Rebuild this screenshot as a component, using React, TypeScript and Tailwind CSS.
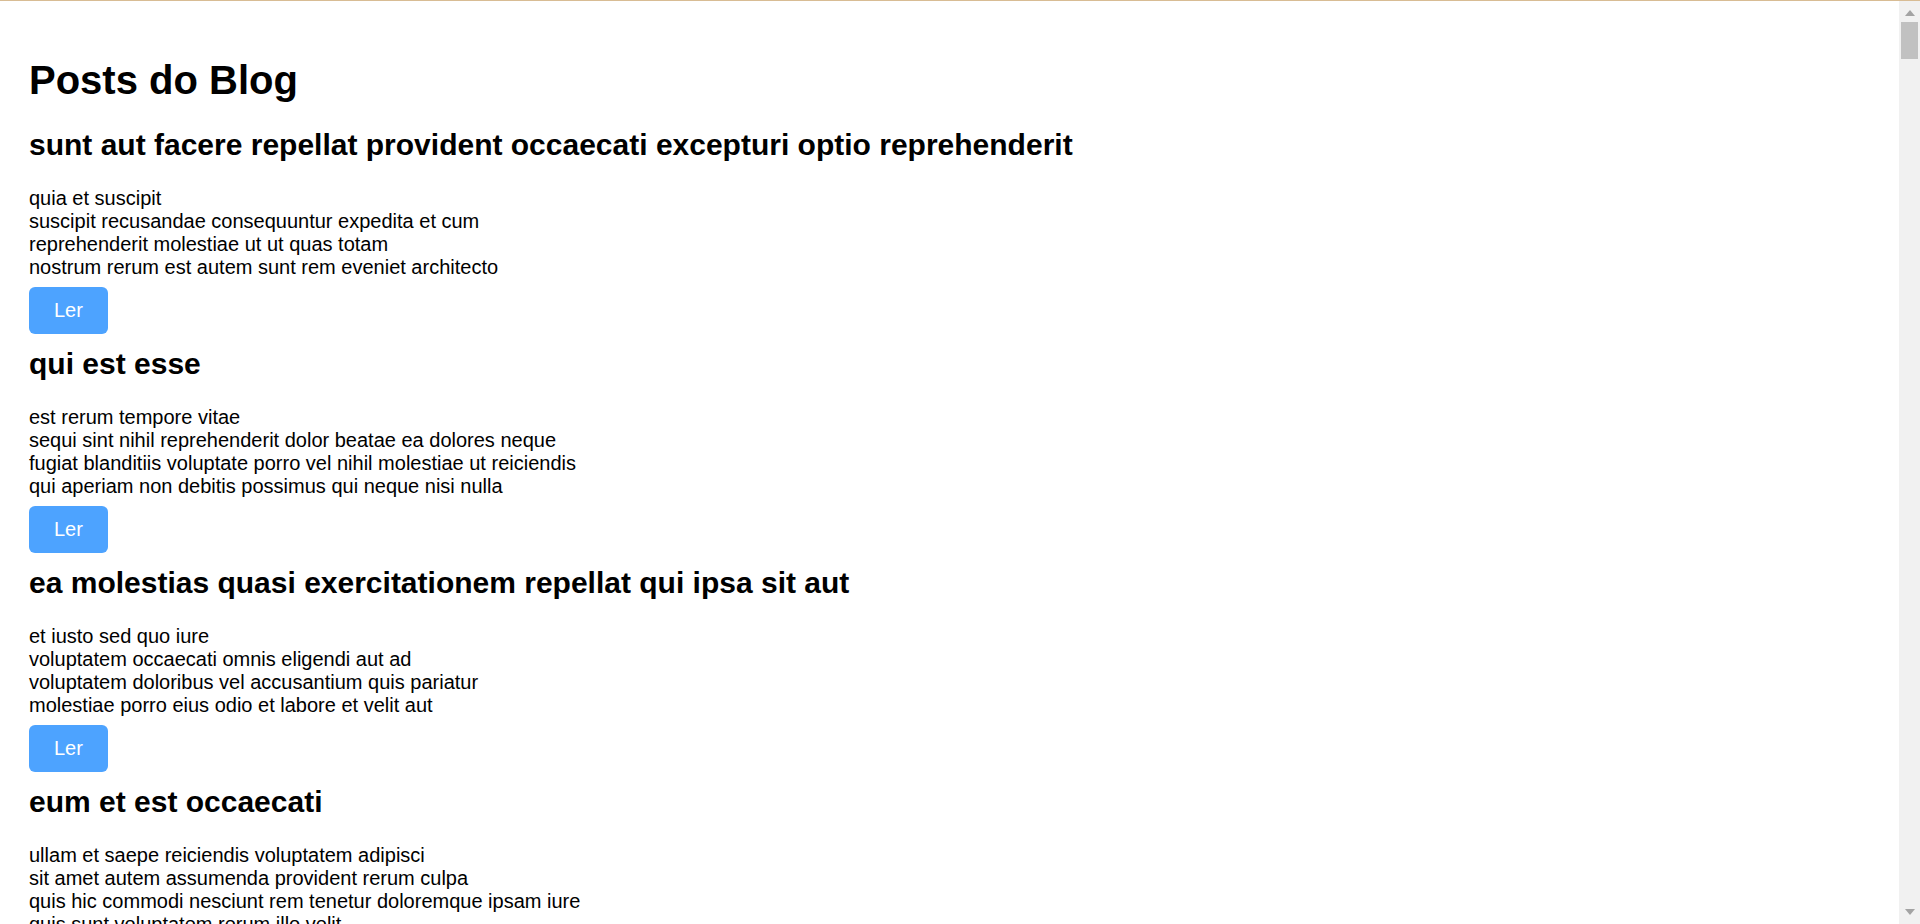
import React from "react";

interface Post {
  id: number;
  title: string;
  body: string;
}

const posts: Post[] = [
  {
    id: 1,
    title: "sunt aut facere repellat provident occaecati excepturi optio reprehenderit",
    body: "quia et suscipit\nsuscipit recusandae consequuntur expedita et cum\nreprehenderit molestiae ut ut quas totam\nnostrum rerum est autem sunt rem eveniet architecto",
  },
  {
    id: 2,
    title: "qui est esse",
    body: "est rerum tempore vitae\nsequi sint nihil reprehenderit dolor beatae ea dolores neque\nfugiat blanditiis voluptate porro vel nihil molestiae ut reiciendis\nqui aperiam non debitis possimus qui neque nisi nulla",
  },
  {
    id: 3,
    title: "ea molestias quasi exercitationem repellat qui ipsa sit aut",
    body: "et iusto sed quo iure\nvoluptatem occaecati omnis eligendi aut ad\nvoluptatem doloribus vel accusantium quis pariatur\nmolestiae porro eius odio et labore et velit aut",
  },
  {
    id: 4,
    title: "eum et est occaecati",
    body: "ullam et saepe reiciendis voluptatem adipisci\nsit amet autem assumenda provident rerum culpa\nquis hic commodi nesciunt rem tenetur doloremque ipsam iure\nquis sunt voluptatem rerum illo velit",
  },
  {
    id: 5,
    title: "nesciunt quas odio",
    body: "repudiandae veniam quaerat sunt sed\nalias aut fugiat sit autem sed est\nvoluptatem omnis possimus esse voluptatibus quis\nest aut tenetur dolor neque",
  },
];

const PostItem = ({ post }: { post: Post }) => {
  return (
    <div className="flex flex-col items-start">
      <h2 className="text-[30px] leading-[34px] font-bold mb-[25px]">{post.title}</h2>
      <p className="text-[20px] leading-[23px] whitespace-pre-line mb-[8px]">{post.body}</p>
      <button
        type="button"
        className="h-[47px] px-[25px] mb-[13px] bg-[#4da3ff] text-white text-[20px] leading-[23px] rounded-[6px]"
      >
        Ler
      </button>
    </div>
  );
};

// fake window scrollbar, the page scrolls in the original
const ScrollBar = () => {
  return (
    <div className="w-[21px] shrink-0 bg-[#f1f1f1] flex flex-col items-center">
      <svg width="10" height="6" viewBox="0 0 10 6" className="mt-[9px]">
        <polygon points="5,0 10,6 0,6" fill="#a3a3a3" />
      </svg>
      <div className="w-[17px] h-[37px] mt-[6px] bg-[#c1c1c1]" />
      <div className="flex-1" />
      <svg width="10" height="6" viewBox="0 0 10 6" className="mb-[9px]">
        <polygon points="0,0 10,0 5,6" fill="#a3a3a3" />
      </svg>
    </div>
  );
};

const App = () => {
  return (
    <div className="h-screen flex flex-col bg-white border-t border-[#d8bc94] text-black font-['Liberation_Sans',Arial,sans-serif]">
      <div className="flex flex-1 min-h-0">
        <div className="flex-1 overflow-hidden pl-[29px] pt-[29px]">
          <h1 className="text-[40px] leading-[46px] font-bold mt-[27px] mb-[25px]">Posts do Blog</h1>
          {posts.map((post) => (
            <PostItem key={post.id} post={post} />
          ))}
        </div>
        <ScrollBar />
      </div>
    </div>
  );
};

export default App;
